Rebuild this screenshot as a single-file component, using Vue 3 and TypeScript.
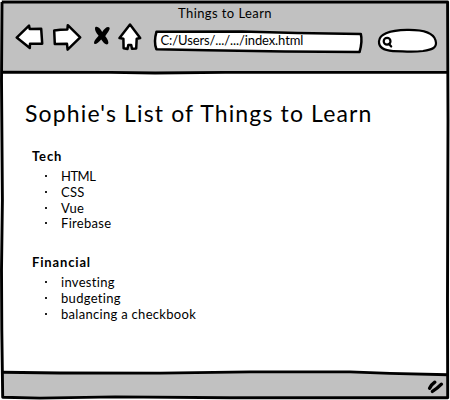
<script setup lang="ts">
interface Section {
  name: string
  items: string[]
}

const title: string = 'Things to Learn'
const heading: string = "Sophie's List of Things to Learn"
const address: string = 'C:/Users/.../.../index.html'
const sections: Section[] = [
  { name: 'Tech', items: ['HTML', 'CSS', 'Vue', 'Firebase'] },
  { name: 'Financial', items: ['investing', 'budgeting', 'balancing a checkbook'] },
]
</script>

<template>
  <div class="window">
    <svg class="frame" viewBox="0 0 450 400" aria-hidden="true">
      <path class="chrome" d="M2 2H447V73H2Z" />
      <path class="chrome" d="M3 372L180 373L240 372L350 371.7L447 375V397L140 396L60 398L3 397Z" />
      <path class="edge" d="M1.8 2H447.6L448 120L447.5 300L447.7 397.7L230 397.8L115 396.9L40 398.1L2.7 397.3L1.8 330L1.5 270L2.4 200L1.5 80L2 2" />
      <path class="edge" d="M2 72.2L110 72.4L155 73L225 72.4H448" />
      <path class="edge" d="M3 372.2L60 373L160 373.1L250 371.9L350 371.9L390 373.4L448 374.8" />
    </svg>
    <header class="header">
      <div class="title"><span>{{ title }}</span></div>
      <div class="toolbar">
        <svg class="nav" viewBox="0 0 130 34" aria-hidden="true">
          <path class="outline" d="M2.7 16.6L15 4.6L15.7 8L27.2 7.8L28.2 22.7L16 22.7L15.8 27Z" />
          <path class="outline" d="M40.2 9.5Q46 8.4 53.4 8.4L53.8 4.2L66.2 16.4L53.6 28.6L53 22.8L40.8 23Z" />
          <path class="cross" d="M81.2 6.3C83.4 4.6 86.4 7.6 88.2 11C90.4 7.2 93.9 4.9 95.6 6.7C96.2 9 92.5 12.6 91.3 15.2C94.1 18.7 95.3 22 93.6 23.3C91.4 24 89.1 21.2 87.2 18.4C84.4 21.4 81.2 24.2 80.2 22.4C79.4 20.4 82.4 17.4 84.6 14.7C81.6 11.6 80.4 8.4 81.2 6.3Z" />
          <path class="outline" d="M116 3.6L126.2 17L122.7 17.7L122.2 27.4L118 27.8L117.2 24L114.3 24L113.5 28L109.6 27.3L109.4 17.7L105.5 17.1Z" />
        </svg>
        <div class="address">
          <svg class="address-box" viewBox="0 0 212 26" aria-hidden="true">
            <path class="outline" d="M4.5 2.7L90 2.5L145 4.1L208.8 4.9Q210.6 12 207.6 22.9L133 22.6L55 21.3L4.4 20.3Q1.5 13 4.5 2.7Z" />
          </svg>
          <span class="address-text">{{ address }}</span>
        </div>
        <svg class="search" viewBox="0 0 64 28" aria-hidden="true">
          <path class="outline thin" d="M3 14.3C3.5 6 14 3.2 31 2.8C48 2.5 57.5 6 59.5 13.2C61.8 21 56 22.6 47 24C34 25.7 27 24 17 24.1C8.5 23.5 2.7 20.5 3 14.3Z" />
          <circle class="lens" cx="11.1" cy="14.2" r="3.4" />
          <path class="lens" d="M12.8 16.8L15.2 19.5" />
        </svg>
      </div>
    </header>
    <main class="page">
      <h1>{{ heading }}</h1>
      <section v-for="section in sections" :key="section.name">
        <h2>{{ section.name }}</h2>
        <ul>
          <li v-for="item in section.items" :key="item">
            <i></i><span :class="{ tight: item === 'HTML' }">{{ item }}</span>
          </li>
        </ul>
      </section>
    </main>
    <footer class="footer">
      <svg class="grip" viewBox="0 0 18 16" aria-hidden="true">
        <path d="M2.6 9.2Q4.6 5.4 7.8 3.2M5.4 12.4Q10.4 9.4 14.4 5.2" />
      </svg>
    </footer>
  </div>
</template>

<style>
body {
  margin: 0;
  background: #fff;
}
</style>

<style scoped>
.window {
  position: relative;
  width: 450px;
  height: 400px;
  display: flex;
  flex-direction: column;
  overflow: hidden;
  font: 13px/16px Lato, "Liberation Sans", sans-serif;
  font-variant-ligatures: none;
  color: #000;
}
.frame {
  position: absolute;
  inset: 0;
  width: 450px;
  height: 400px;
}
.chrome { fill: #c1c1c1; }
.edge { fill: none; stroke: #000; stroke-width: 2.9; stroke-linejoin: round; }
.header, .page, .footer { position: relative; box-sizing: border-box; }
.header { height: 73px; padding-top: 5px; }
.title { text-align: center; height: 16px; letter-spacing: 0.42px; }
.toolbar { display: flex; align-items: flex-start; padding: 0 8px 0 14px; }
.nav { width: 130px; height: 34px; flex: none; }
.outline { fill: #fff; stroke: #000; stroke-width: 2.5; stroke-linejoin: round; }
.cross { fill: #000; }
.address { position: relative; width: 212px; height: 26px; margin: 8px 0 0 8px; flex: none; }
.address-box { position: absolute; inset: 0; width: 212px; height: 26px; }
.address-text { position: relative; display: block; padding: 3px 0 0 8.5px; white-space: nowrap; letter-spacing: -0.1px; }
.search { width: 64px; height: 28px; margin: 6px 0 0 12px; flex: none; }
.thin { stroke-width: 2.2; }
.lens { fill: none; stroke: #000; stroke-width: 2.2; stroke-linecap: round; }
.page { height: 299px; padding: 26px 0 0 32px; }
h1 { margin: 0 0 21px -7px; font-size: 23px; line-height: 28px; font-weight: 400; letter-spacing: 1.14px; white-space: nowrap; }
section + section { margin-top: 23px; }
h2 { margin: 0 0 4px; font-size: 13px; line-height: 16px; font-weight: 700; letter-spacing: 0.85px; }
ul { list-style: none; margin: 0; padding: 0; }
li { display: flex; align-items: center; height: 15.85px; padding-left: 13px; letter-spacing: 0.3px; }
li i { width: 2px; height: 2px; background: #222; margin-right: 14px; }
.tight { letter-spacing: -0.5px; }
.footer { flex: 1; display: flex; justify-content: flex-end; padding: 7px 5px 0 0; }
.grip { width: 18px; height: 16px; }
.grip path { fill: none; stroke: #000; stroke-width: 3.4; stroke-linecap: round; }
</style>
